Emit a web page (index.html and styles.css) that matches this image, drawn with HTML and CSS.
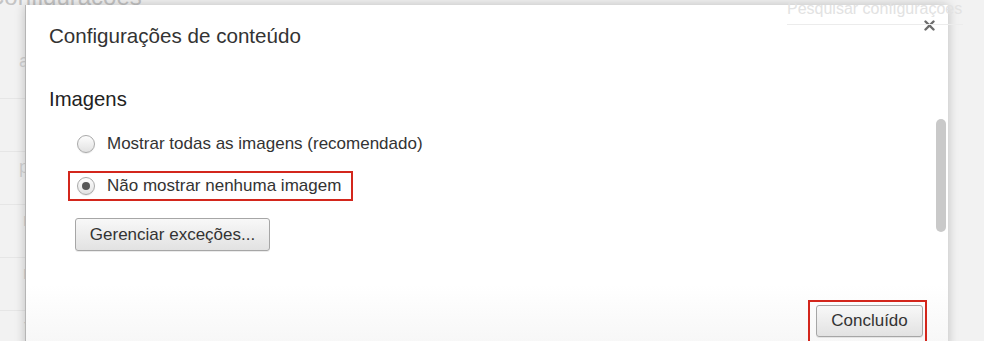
FILE: index.html
```html
<!DOCTYPE html>
<html>
<head>
<title>Configurações de conteúdo</title>
<link rel="stylesheet" href="styles.css">
</head>

<body>
  <div class="backdrop">
    <div class="backdrop-header">
      <p class="backdrop-title">Configurações</p>
      <p class="search">Pesquisar configurações</p>
    </div>
    <div class="side">
      <p class="side-row">a</p>
      <p class="side-row">l</p>
      <p class="side-row">p</p>
      <p class="side-row">r</p>
      <p class="side-row">r</p>
      <p class="side-row">t</p>
    </div>
  </div>

  <div class="dialog">
    <p class="dialog-title">Configurações de conteúdo</p>
    <svg class="close" width="11" height="11" viewBox="0 0 11 11">
      <path d="M1.5 1.5 L9.5 9.5 M9.5 1.5 L1.5 9.5" stroke="#6b6b6b" stroke-width="2.4" stroke-linecap="round"/>
    </svg>

    <p class="section-title">Imagens</p>

    <div class="options">
      <label class="option">
        <span class="radio"></span>
        Mostrar todas as imagens (recomendado)
      </label>
      <label class="option marked">
        <span class="radio checked"></span>
        Não mostrar nenhuma imagem
      </label>
    </div>

    <button class="btn manage">Gerenciar exceções...</button>

    <div class="footer">
      <div class="done-mark">
        <button class="btn done">Concluído</button>
      </div>
    </div>

    <div class="scrollbar"></div>
  </div>
</body>

</html>
```

FILE: styles.css
```css
body{
  margin: 0;
  width: 984px;
  height: 341px;
  overflow: hidden;
  position: relative;
  background-color: #f2f2f2;
  font-family: "Liberation Sans", Arial, sans-serif;
}
p{
  margin: 0;
}
.backdrop-header{
  display: flex;
  justify-content: space-between;
  height: 26px;
}
.backdrop-title{
  margin: -15px 0 0 -13px;
  font-size: 24px;
  line-height: 24px;
  color: #c4c4c4;
}
.search{
  position: relative;
  z-index: 2;
  width: 176px;
  height: 24px;
  margin: 0 21px 0 0;
  border-bottom: 1px solid #ececec;
  font-size: 16px;
  line-height: 18px;
  color: #e2e2e2;
  white-space: nowrap;
  overflow: hidden;
}
.side{
  width: 29px;
  margin-top: 20px;
}
.side-row{
  height: 52px;
  border-bottom: 1px solid #e6e6e6;
  text-align: right;
  font-size: 18px;
  line-height: 30px;
  color: #d2d2d2;
}

.dialog{
  position: absolute;
  left: 25px;
  top: 5px;
  width: 923px;
  height: 345px;
  box-sizing: border-box;
  border-left: 1px solid #b5b5b5;
  background: linear-gradient(#ffffff 280px, #f6f6f6);
  box-shadow: 0 0 10px rgba(0, 0, 0, 0.22);
  z-index: 1;
}
.dialog-title{
  margin: 19px 0 0 23px;
  font-size: 20.6px;
  line-height: 24px;
  color: #333;
}
.close{
  position: absolute;
  top: 15px;
  right: 13px;
}
.section-title{
  margin: 39px 0 0 23px;
  font-size: 20.3px;
  line-height: 24px;
  color: #222;
}
.options{
  display: flex;
  flex-direction: column;
  align-items: flex-start;
  gap: 12px;
  margin: 18px 0 0 42px;
}
.option{
  display: flex;
  align-items: center;
  gap: 12px;
  height: 30px;
  box-sizing: border-box;
  padding: 0 10px 0 7px;
  border: 2px solid transparent;
  font-size: 17px;
  color: #333;
}
.option.marked{
  border-color: #d3261c;
}
.radio{
  display: flex;
  align-items: center;
  justify-content: center;
  width: 18px;
  height: 18px;
  box-sizing: border-box;
  border: 1px solid #a9a9a9;
  border-radius: 50%;
  background: linear-gradient(#fdfdfd, #e2e2e2);
  box-shadow: 0 1px 1px rgba(0, 0, 0, 0.08);
}
.radio.checked::after{
  content: "";
  width: 8px;
  height: 8px;
  border-radius: 50%;
  background-color: #555;
}
.btn{
  height: 33px;
  padding: 0 14px;
  border: 1px solid #a6a6a6;
  border-radius: 3px;
  background: linear-gradient(#f8f8f8, #e2e2e2);
  box-shadow: 0 1px 0 rgba(0, 0, 0, 0.08);
  font-family: inherit;
  font-size: 17px;
  color: #333;
  white-space: nowrap;
}
.manage{
  display: block;
  width: 195px;
  padding: 0;
  margin: 17px 0 0 49px;
}
.footer{
  display: flex;
  justify-content: flex-end;
  margin: 49px 21px 0 0;
}
.done-mark{
  padding: 3px 2px 6px 6px;
  border: 2px solid #d3261c;
}
.done{
  width: 107px;
  height: 32px;
  padding: 0;
}
.scrollbar{
  position: absolute;
  top: 114px;
  right: 2px;
  width: 10px;
  height: 113px;
  border-radius: 5px;
  background-color: #c9c9c9;
}
```
